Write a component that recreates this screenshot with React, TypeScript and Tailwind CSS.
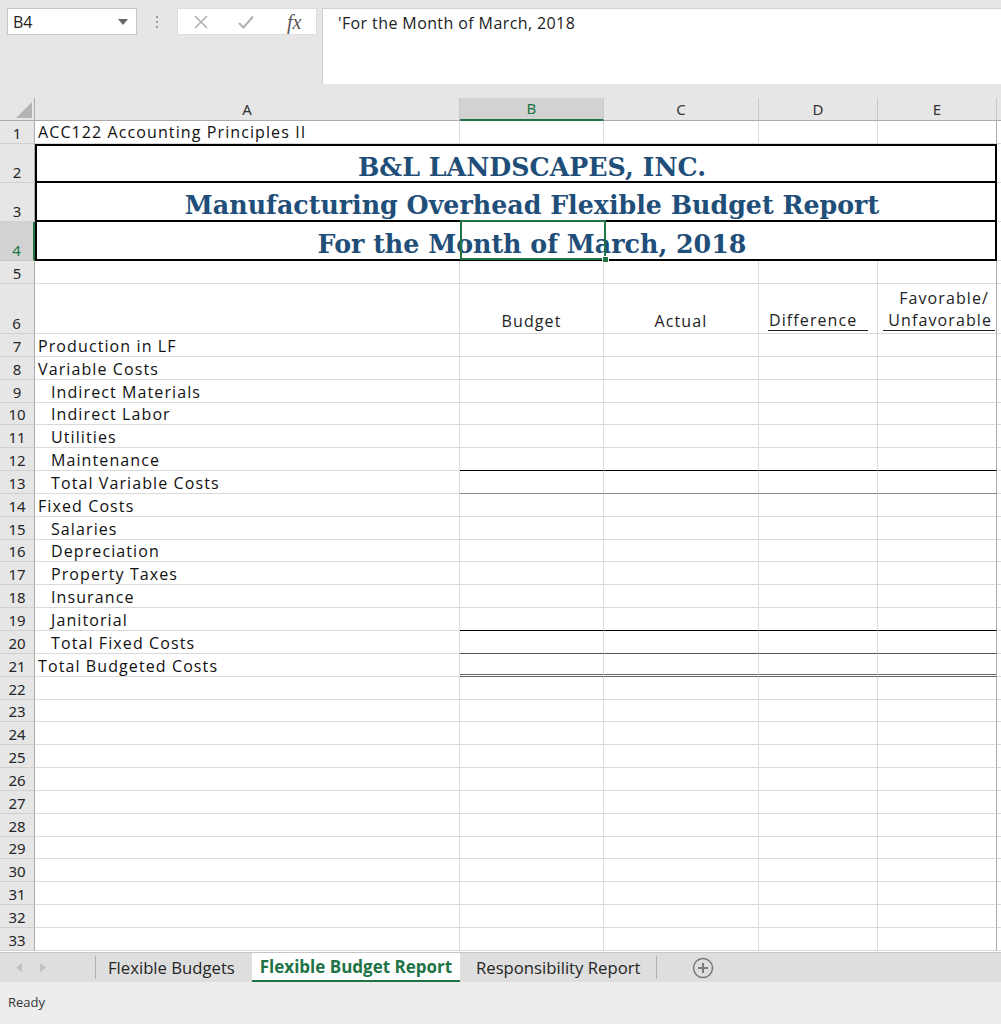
import React from "react";

type Line = "none" | "black" | "gray" | "dark" | "double";

type DataRow = {
  n: number;
  label?: string;
  indent?: boolean;
  line?: Line;
};

const dataRows: DataRow[] = [
  { n: 7, label: "Production in LF" },
  { n: 8, label: "Variable Costs" },
  { n: 9, label: "Indirect Materials", indent: true },
  { n: 10, label: "Indirect Labor", indent: true },
  { n: 11, label: "Utilities", indent: true },
  { n: 12, label: "Maintenance", indent: true, line: "black" },
  { n: 13, label: "Total Variable Costs", indent: true, line: "gray" },
  { n: 14, label: "Fixed Costs" },
  { n: 15, label: "Salaries", indent: true },
  { n: 16, label: "Depreciation", indent: true },
  { n: 17, label: "Property Taxes", indent: true },
  { n: 18, label: "Insurance", indent: true },
  { n: 19, label: "Janitorial", indent: true, line: "black" },
  { n: 20, label: "Total Fixed Costs", indent: true, line: "dark" },
  { n: 21, label: "Total Budgeted Costs", line: "double" },
  ...Array.from({ length: 12 }, (_, i) => ({ n: 22 + i })),
];

const lineClass: Record<Line, string> = {
  none: "border-b border-b-[#dadada]",
  black: "border-b border-b-black",
  gray: "border-b border-b-[#8a8a8a]",
  dark: "border-b border-b-[#555555]",
  double: "border-b-[3px] border-double border-b-[#666666]",
};

const RowHead = ({ n, active }: { n: number; active?: boolean }) => (
  <div
    className={
      active
        ? "w-[35px] shrink-0 h-full flex items-end justify-center bg-[#d2d2d2] text-[#217346] border-r-2 border-r-[#217346] border-b border-b-[#c8c8c8] text-[15px] leading-[20px]"
        : "w-[35px] shrink-0 h-full flex items-end justify-center bg-[#e6e6e6] text-[#262626] border-r border-r-[#ababab] border-b border-b-[#d0d0d0] text-[15px] leading-[20px]"
    }
    style={{ fontFamily: '"Noto Sans", sans-serif' }}
  >
    {n}
  </div>
);

const ValueCells = ({ line = "none" }: { line?: Line }) => (
  <>
    <div className={`w-[144px] shrink-0 h-full border-r border-r-[#dadada] ${lineClass[line]}`} />
    <div className={`w-[155px] shrink-0 h-full border-r border-r-[#dadada] ${lineClass[line]}`} />
    <div className={`w-[119px] shrink-0 h-full border-r border-r-[#dadada] ${lineClass[line]}`} />
    <div className={`w-[119px] shrink-0 h-full border-r border-r-[#aaaaaa] ${lineClass[line]}`} />
    <div className="flex-1 h-full border-b border-b-[#dadada]" />
  </>
);

const TitleRow = ({ n, text, first, active }: { n: number; text: string; first?: boolean; active?: boolean }) => (
  <div className="flex h-[39px]">
    <RowHead n={n} active={active} />
    <div
      className={
        first
          ? "relative w-[962px] shrink-0 h-full border-2 border-black flex items-center justify-center pl-[32px] pt-[9px] text-[25.3px] font-bold text-[#1f4e79]"
          : "relative w-[962px] shrink-0 h-full border-x-2 border-b-2 border-black flex items-center justify-center pl-[32px] pt-[9px] text-[25.3px] font-bold text-[#1f4e79]"
      }
      style={{ fontFamily: '"DejaVu Serif", serif' }}
    >
      {text}
      {active && (
        <div className="absolute left-[423px] top-[-2px] w-[146px] h-[40px] border-2 border-[#217346]">
          <div className="absolute right-[-5px] bottom-[-5px] w-[7px] h-[7px] bg-[#217346] border border-white" />
        </div>
      )}
    </div>
    <div className="flex-1 h-full border-b border-b-[#dadada]" />
  </div>
);

export default function App() {
  const cell = { fontFamily: '"Open Sans", sans-serif' };
  return (
    <div
      className="w-[1001px] h-[1024px] bg-[#e6e6e6] flex flex-col overflow-hidden"
      style={{ fontFamily: '"Open Sans", sans-serif' }}
    >
      {/* formula bar */}
      <div className="h-[98px] shrink-0 flex pt-[8px]">
        <div className="ml-[7px] w-[130px] h-[27px] bg-white border border-[#c6c6c6] flex items-center justify-between pl-[5px] pr-[8px] text-[16px] text-[#222]">
          <span>B4</span>
          <svg width="10" height="6" viewBox="0 0 10 6">
            <path d="M0 0 L10 0 L5 6 Z" fill="#666" />
          </svg>
        </div>
        <div className="w-[40px] h-[27px] flex flex-col items-center justify-center gap-[3px]">
          <span className="w-[2px] h-[2px] bg-[#9a9a9a]" />
          <span className="w-[2px] h-[2px] bg-[#9a9a9a]" />
          <span className="w-[2px] h-[2px] bg-[#9a9a9a]" />
        </div>
        <div className="w-[140px] h-[27px] bg-white border border-[#dcdcdc] flex items-center">
          <svg className="ml-[16px]" width="14" height="14" viewBox="0 0 14 14">
            <path d="M1 1 L13 13 M13 1 L1 13" stroke="#b0b0b0" strokeWidth="1.6" />
          </svg>
          <svg className="ml-[30px]" width="16" height="14" viewBox="0 0 16 14">
            <path d="M1 8 L5.5 12.5 L15 1.5" stroke="#b0b0b0" strokeWidth="2" fill="none" />
          </svg>
          <span
            className="ml-[33px] text-[20px] italic text-[#555]"
            style={{ fontFamily: '"Liberation Serif", serif' }}
          >
            fx
          </span>
        </div>
        <div className="ml-[5px] flex-1 h-[76px] bg-white border-l border-t border-[#d0d0d0] pl-[15px] pt-[2px] text-[16px] tracking-[0.4px] text-[#222]">
          'For the Month of March, 2018
        </div>
      </div>

      {/* sheet */}
      <div className="flex-1 bg-white flex flex-col overflow-hidden">
        {/* column headers */}
        <div
          className="flex h-[23px] shrink-0 bg-[#e6e6e6] text-[15px] text-[#333]"
          style={{ fontFamily: '"Noto Sans", sans-serif' }}
        >
          <div className="w-[35px] h-full border-r border-b border-[#ababab] flex items-end justify-end p-[2px]">
            <svg width="16" height="16" viewBox="0 0 16 16">
              <path d="M16 0 L16 16 L0 16 Z" fill="#b4b4b4" />
            </svg>
          </div>
          <div className="w-[425px] h-full border-r border-r-[#c8c8c8] border-b border-b-[#ababab] flex items-center justify-center">A</div>
          <div className="w-[144px] h-full bg-[#d2d2d2] border-r border-r-[#c8c8c8] border-b-2 border-b-[#217346] flex items-center justify-center text-[#217346]">B</div>
          <div className="w-[155px] h-full border-r border-r-[#c8c8c8] border-b border-b-[#ababab] flex items-center justify-center">C</div>
          <div className="w-[119px] h-full border-r border-r-[#c8c8c8] border-b border-b-[#ababab] flex items-center justify-center">D</div>
          <div className="w-[119px] h-full border-r border-r-[#c8c8c8] border-b border-b-[#ababab] flex items-center justify-center">E</div>
          <div className="flex-1 h-full border-b border-b-[#ababab]" />
        </div>

        {/* row 1 */}
        <div className="flex h-[23px] shrink-0">
          <RowHead n={1} />
          <div className="w-[425px] shrink-0 h-full border-r border-b border-[#dadada] pl-[3px] text-[16px] tracking-[1.1px] leading-[21px] text-[#111] flex items-end" style={cell}>
            ACC122 Accounting Principles II
          </div>
          <ValueCells />
        </div>

        <TitleRow n={2} text="B&L LANDSCAPES, INC." first />
        <TitleRow n={3} text="Manufacturing Overhead Flexible Budget Report" />
        <TitleRow n={4} text="For the Month of March, 2018" active />

        {/* row 5 */}
        <div className="flex h-[23px] shrink-0">
          <RowHead n={5} />
          <div className="w-[425px] shrink-0 h-full border-r border-b border-[#dadada]" />
          <ValueCells />
        </div>

        {/* row 6 */}
        <div className="flex h-[50px] shrink-0 text-[16px] tracking-[1.1px] text-[#222]" style={cell}>
          <RowHead n={6} />
          <div className="w-[425px] shrink-0 h-full border-r border-b border-[#dadada]" />
          <div className="w-[144px] shrink-0 h-full border-r border-b border-[#dadada] flex items-end justify-center pb-[1px] leading-[21px]">Budget</div>
          <div className="w-[155px] shrink-0 h-full border-r border-b border-[#dadada] flex items-end justify-center pb-[1px] leading-[21px]">Actual</div>
          <div className="w-[119px] shrink-0 h-full border-r border-b border-[#dadada] flex items-end pb-[2px]">
            <div className="mx-[9px] flex-1 border-b border-[#222] pl-[1px] leading-[20px]">Difference</div>
          </div>
          <div className="w-[119px] shrink-0 h-full border-r border-r-[#aaaaaa] border-b border-b-[#dadada] flex flex-col items-end justify-end pb-[2px]">
            <div className="pr-[7px] leading-[24px]">Favorable/</div>
            <div className="ml-[5px] mr-[1px] self-stretch border-b border-[#222] text-right pr-[3px] leading-[20px]">Unfavorable</div>
          </div>
          <div className="flex-1 h-full border-b border-b-[#dadada]" />
        </div>

        {/* rows 7-33 */}
        {dataRows.map((r) => (
          <div key={r.n} className="flex h-[22.85px] shrink-0">
            <RowHead n={r.n} />
            <div
              className={
                r.indent
                  ? "w-[425px] shrink-0 h-full border-r border-b border-[#dadada] pl-[16px] text-[16px] tracking-[1.1px] text-[#111] flex items-end leading-[20px]"
                  : "w-[425px] shrink-0 h-full border-r border-b border-[#dadada] pl-[3px] text-[16px] tracking-[1.1px] text-[#111] flex items-end leading-[20px]"
              }
              style={cell}
            >
              {r.label}
            </div>
            <ValueCells line={r.line} />
          </div>
        ))}
      </div>

      {/* sheet tabs */}
      <div className="h-[30px] shrink-0 bg-[#dedede] border-t border-[#c6c6c6] flex items-stretch text-[16.7px] text-[#262626]">
        <div className="w-[95px] flex items-center pl-[16px] gap-[18px]">
          <svg width="6" height="9" viewBox="0 0 6 9">
            <path d="M6 0 L0 4.5 L6 9 Z" fill="#c0c0c0" />
          </svg>
          <svg width="6" height="9" viewBox="0 0 6 9">
            <path d="M0 0 L6 4.5 L0 9 Z" fill="#c0c0c0" />
          </svg>
        </div>
        <div className="my-[3px] w-px bg-[#b0b0b0]" />
        <div className="w-[156px] flex items-center pl-[12px]">Flexible Budgets</div>
        <div className="w-[208px] bg-white border-b-2 border-[#217346] flex items-center justify-center font-bold text-[17px] text-[#217346]">
          Flexible Budget Report
        </div>
        <div className="w-[196px] flex items-center pl-[16px]">Responsibility Report</div>
        <div className="my-[3px] w-px bg-[#b0b0b0]" />
        <div className="ml-[35px] flex items-center">
          <svg width="22" height="22" viewBox="0 0 22 22">
            <circle cx="11" cy="11" r="9.5" fill="none" stroke="#7a7a7a" strokeWidth="1.5" />
            <path d="M11 6 V16 M6 11 H16" stroke="#7a7a7a" strokeWidth="2" />
          </svg>
        </div>
      </div>

      {/* status bar */}
      <div className="h-[42px] shrink-0 bg-[#ededed] flex items-center pl-[8px] text-[13px] text-[#333]">
        Ready
      </div>
    </div>
  );
}
